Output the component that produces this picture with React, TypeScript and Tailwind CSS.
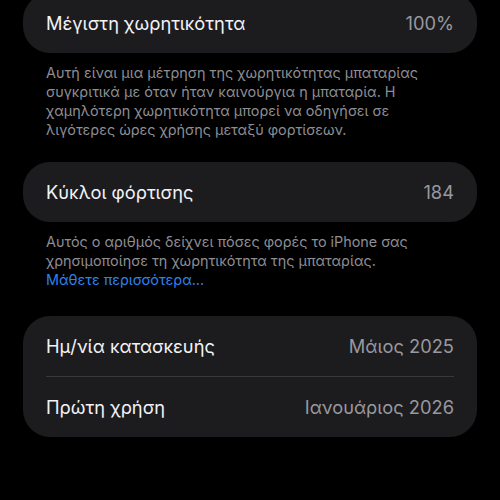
import React from 'react';

const Row: React.FC<{ label: string; value: string }> = ({ label, value }) => (
  <div className="flex items-center justify-between h-[60px] px-[23px] pt-[2px]">
    <span className="text-[18.3px] text-[#f2f2f7]">{label}</span>
    <span className="text-[18.3px] text-[#98989e]">{value}</span>
  </div>
);

const Footer: React.FC<{ children: React.ReactNode }> = ({ children }) => (
  <p className="pl-[46px] pr-[40px] text-[14.4px] leading-[19px] text-[#8d8d93]">{children}</p>
);

export default function App() {
  return (
    <div
      className="w-[500px] h-[500px] bg-black overflow-hidden flex flex-col"
      style={{ fontFamily: 'Inter, "Noto Sans", sans-serif' }}
    >
      <div className="mx-[23px] mt-[-7px] rounded-[27px] bg-[#1c1c1e]">
        <Row label="Μέγιστη χωρητικότητα" value="100%" />
      </div>
      <div className="mt-[10px]">
        <Footer>
          Αυτή είναι μια μέτρηση της χωρητικότητας μπαταρίας συγκριτικά με όταν ήταν καινούργια η μπαταρία. Η χαμηλότερη χωρητικότητα μπορεί να οδηγήσει σε λιγότερες ώρες χρήσης μεταξύ φορτίσεων.
        </Footer>
      </div>

      <div className="mx-[23px] mt-[23px] rounded-[27px] bg-[#1c1c1e]">
        <Row label="Κύκλοι φόρτισης" value="184" />
      </div>
      <div className="mt-[10px]">
        <Footer>
          Αυτός ο αριθμός δείχνει πόσες φορές το iPhone σας χρησιμοποίησε τη χωρητικότητα της μπαταρίας.
          <br />
          <span className="text-[#2f80ed]">Μάθετε περισσότερα...</span>
        </Footer>
      </div>

      <div className="mx-[23px] mt-[27px] rounded-[27px] bg-[#1c1c1e] flex flex-col">
        <Row label="Ημ/νία κατασκευής" value="Μάιος 2025" />
        <div className="mx-[23px] h-px bg-[#38383a]" />
        <Row label="Πρώτη χρήση" value="Ιανουάριος 2026" />
      </div>
    </div>
  );
}
